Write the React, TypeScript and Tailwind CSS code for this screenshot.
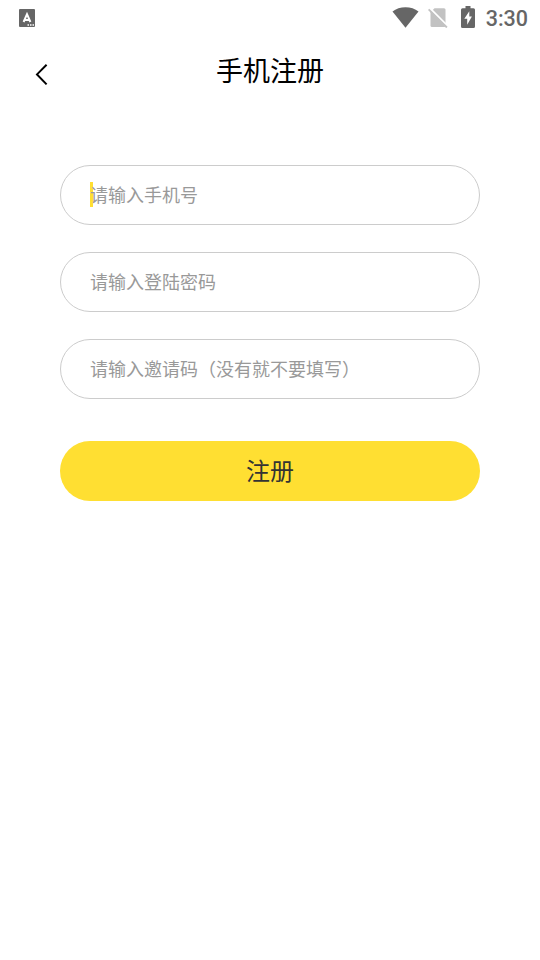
import React from 'react';

interface Field {
  placeholder: string;
  focused?: boolean;
}

const StatusBar = () => (
  <div className="flex h-9 items-start justify-between pl-[19px] pr-3 text-[#666666]">
    <svg className="mt-[9px]" width="16" height="18" viewBox="0 0 16 18">
      <rect width="16" height="18" rx="1" fill="currentColor" />
      <path d="M4.6 13 8 5.200l3.400 7.800M5.500 10.900h5" fill="none" stroke="#fff" strokeWidth="2" />
      <path d="M8.500 16h6.500" stroke="#fff" strokeWidth="1.500" strokeDasharray="1.500 1" />
    </svg>
    <div className="flex items-start">
      <svg className="mt-[7px] mr-[9px]" width="27" height="21" viewBox="0 0 27 21">
        <path d="M13.500 20.800 0.500 4.500C4 1.800 8.500 0.300 13.500 0.300s9.500 1.500 13 4.200z" fill="currentColor" />
      </svg>
      <svg className="mt-2 mr-[13px]" width="20" height="20" viewBox="0 0 20 20">
        <path d="M6.500 0.300h9.500a1.500 1.500 0 0 1 1.500 1.500v15.700a1.500 1.500 0 0 1-1.500 1.500H4a1.500 1.500 0 0 1-1.500-1.500V4.300z" fill="#c2c2c2" />
        <path d="M1.500 -0.200 21 19.500" stroke="#fff" strokeWidth="2" />
        <path d="M0.600 1.300l18.300 18.200" stroke="#c2c2c2" strokeWidth="1.900" />
      </svg>
      <svg className="mt-1.5 mr-[11px]" width="14" height="22" viewBox="0 0 14 22">
        <path d="M4.500 0h5v2.200H12.500A1.500 1.500 0 0 1 14 3.700v16.800a1.500 1.500 0 0 1-1.500 1.500h-11A1.500 1.500 0 0 1 0 20.500V3.700A1.500 1.500 0 0 1 1.500 2.200h3z" fill="currentColor" />
        <path d="M8.300 5.200 3.300 12.800h2.900v6l4.700-8.300H8.300z" fill="#fff" />
      </svg>
      <span className="mt-2 text-[21.5px] font-medium leading-[22px]">3:30</span>
    </div>
  </div>
);

const RegisterForm = () => {
  const fields: Field[] = [
    { placeholder: '请输入手机号', focused: true },
    { placeholder: '请输入登陆密码' },
    { placeholder: '请输入邀请码（没有就不要填写）' },
  ];

  return (
    <form className="flex flex-col px-[60px] pt-[59px] font-['Noto_Sans_CJK_SC',sans-serif]">
      <div className="flex flex-col gap-[27px]">
        {fields.map((field) => (
          <div
            key={field.placeholder}
            className="relative flex h-[60px] items-center rounded-full border border-[#cccccc] pb-0.5 pl-[29px]"
          >
            {field.focused && <span className="absolute left-[29px] top-4 h-[25px] w-[3px] bg-[#ffdf32]" />}
            <span className="relative text-[18px] leading-none text-[#999999]">{field.placeholder}</span>
          </div>
        ))}
      </div>
      <button type="button" className="mt-[42px] h-[60px] rounded-full bg-[#ffdf32] pb-0.5 text-[24px] text-[#333333]">
        注册
      </button>
    </form>
  );
};

const App = () => (
  <div className="min-h-[960px] w-full bg-white font-[Roboto,sans-serif]">
    <StatusBar />
    <header className="grid h-[70px] grid-cols-[60px_1fr_60px] items-center">
      <svg className="ml-[35px] mt-[7px]" width="13" height="22" viewBox="0 0 13 22">
        <path d="M11.600 0.700 2 10.400l9.600 10" fill="none" stroke="#000" strokeWidth="2" />
      </svg>
      <h1 className="pb-[3px] text-center font-['Noto_Sans_CJK_SC',sans-serif] text-[27px] leading-none text-black">手机注册</h1>
    </header>
    <RegisterForm />
  </div>
);

export default App;
